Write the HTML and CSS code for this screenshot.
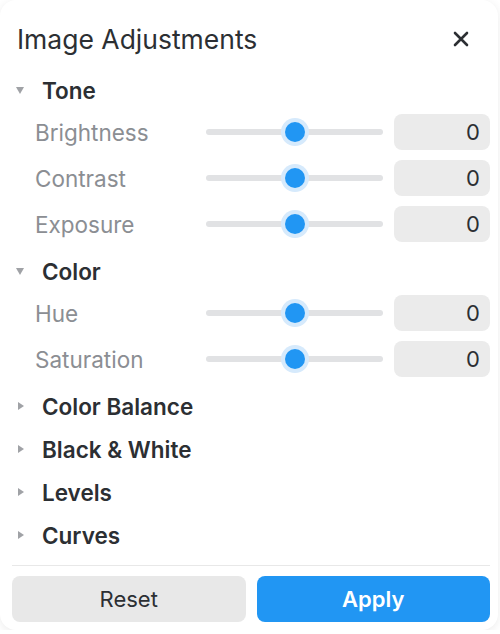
FILE: index.html
```html
<!DOCTYPE html>
<html lang="en">
<head>
    <meta charset="UTF-8">
    <meta name="viewport" content="width=device-width, initial-scale=1.0">
    <title>Image Adjustments</title>
    <link rel="stylesheet" href="styles.css">
</head>
<body>
    <div class="panel">
        <div class="panel-header">
            <h1>Image Adjustments</h1>
            <button class="close-button" aria-label="Close">
                <svg width="16" height="16" viewBox="0 0 16 16">
                    <path d="M2 2 L14 14 M14 2 L2 14" stroke="#2c2f33" stroke-width="2.6" stroke-linecap="round"/>
                </svg>
            </button>
        </div>

        <div class="section open">
            <div class="section-title"><span class="arrow"></span>Tone</div>
            <div class="control-row">
                <span class="control-label">Brightness</span>
                <div class="slider"><div class="thumb"></div></div>
                <div class="value-box">0</div>
            </div>
            <div class="control-row">
                <span class="control-label">Contrast</span>
                <div class="slider"><div class="thumb"></div></div>
                <div class="value-box">0</div>
            </div>
            <div class="control-row">
                <span class="control-label">Exposure</span>
                <div class="slider"><div class="thumb"></div></div>
                <div class="value-box">0</div>
            </div>
        </div>

        <div class="section open">
            <div class="section-title"><span class="arrow"></span>Color</div>
            <div class="control-row">
                <span class="control-label">Hue</span>
                <div class="slider"><div class="thumb"></div></div>
                <div class="value-box">0</div>
            </div>
            <div class="control-row">
                <span class="control-label">Saturation</span>
                <div class="slider"><div class="thumb"></div></div>
                <div class="value-box">0</div>
            </div>
        </div>

        <div class="section">
            <div class="section-title"><span class="arrow"></span>Color Balance</div>
        </div>
        <div class="section">
            <div class="section-title"><span class="arrow"></span>Black &amp; White</div>
        </div>
        <div class="section">
            <div class="section-title"><span class="arrow"></span>Levels</div>
        </div>
        <div class="section">
            <div class="section-title"><span class="arrow"></span>Curves</div>
        </div>

        <div class="panel-footer">
            <button class="btn btn-reset">Reset</button>
            <button class="btn btn-apply">Apply</button>
        </div>
    </div>
</body>
</html>
```

FILE: styles.css
```css
body {
    font-family: 'Inter', 'Noto Sans', sans-serif;
    background-color: #ffffff;
    margin: 0;
    padding: 0;
}

.panel {
    width: 498px;
    height: 630px;
    box-sizing: border-box;
    padding: 18px 8px 8px 12px;
    background: #ffffff;
    border-radius: 16px;
    box-shadow: 0 2px 10px rgba(0, 0, 0, 0.08);
    display: flex;
    flex-direction: column;
}

.panel-header {
    display: flex;
    align-items: center;
    justify-content: space-between;
    height: 42px;
    padding-left: 5px;
    margin-bottom: 6px;
}

.panel-header h1 {
    margin: 0;
    font-size: 26.5px;
    font-weight: 400;
    color: #2c2f33;
}

.close-button {
    background: none;
    border: none;
    padding: 0;
    margin-right: 21px;
    width: 16px;
    height: 16px;
    cursor: pointer;
}

.close-button svg {
    display: block;
}

.section {
    margin-top: 5px;
}

.section-title {
    display: flex;
    align-items: center;
    height: 38px;
    font-size: 22.5px;
    font-weight: 600;
    color: #2c2f33;
}

.arrow {
    width: 30px;
    display: flex;
    align-items: center;
    padding-left: 6px;
    box-sizing: border-box;
}

.arrow::before {
    content: "";
    border-top: 4px solid transparent;
    border-bottom: 4px solid transparent;
    border-left: 6px solid #a0a2a6;
}

.section.open .arrow {
    padding-left: 4px;
}

.section.open .arrow::before {
    border-left: 4px solid transparent;
    border-right: 4px solid transparent;
    border-top: 7px solid #a0a2a6;
    border-bottom: none;
}

.control-row {
    display: grid;
    grid-template-columns: 171px 188px 96px;
    align-items: center;
    height: 46px;
    padding-left: 23px;
}

.control-label {
    font-size: 22.5px;
    color: #8b8e93;
}

.slider {
    position: relative;
    width: 177px;
    height: 6px;
    border-radius: 3px;
    background: #e1e2e4;
}

.thumb {
    position: absolute;
    top: 50%;
    left: 50%;
    width: 20px;
    height: 20px;
    margin: -10px 0 0 -10px;
    border-radius: 50%;
    background: #2196f3;
    box-shadow: 0 0 0 4px #d6eafc;
}

.value-box {
    height: 36px;
    border-radius: 8px;
    background: #ebebeb;
    font-size: 22px;
    color: #2c2f33;
    text-align: right;
    line-height: 36px;
    padding-right: 10px;
}

.panel-footer {
    margin-top: auto;
    border-top: 1px solid #e8e8e8;
    padding-top: 10px;
    display: flex;
    gap: 11px;
}

.btn {
    flex: 1;
    height: 46px;
    border: none;
    border-radius: 8px;
    font-family: inherit;
    font-size: 22px;
    cursor: pointer;
}

.btn-reset {
    background: #e8e8e8;
    color: #2c2f33;
}

.btn-apply {
    background: #2196f3;
    color: #ffffff;
    font-weight: 600;
}
```
